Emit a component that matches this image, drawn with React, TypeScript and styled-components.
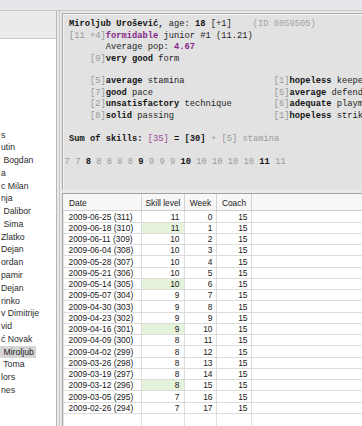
import React from 'react';
import styled, { createGlobalStyle } from 'styled-components';

const Global = createGlobalStyle`
  html, body { margin: 0; padding: 0; width: 362px; height: 426px; overflow: hidden; background: #e9e9e9; }
  #root { width: 362px; height: 426px; overflow: hidden; }
  * { box-sizing: border-box; }
`;

const Window = styled.div`
  width: 362px;
  height: 426px;
  display: flex;
  flex-direction: column;
  overflow: hidden;
  background: #e9e9e9;
`;

const TopStrip = styled.div`
  height: 11px;
  flex: none;
  background: #e6e7ec;
  border-bottom: 1px solid #c6c7cb;
`;

const Body = styled.div`
  flex: 1;
  display: flex;
  min-height: 0;
`;

const LeftPanel = styled.div`
  width: 57px;
  flex: none;
  display: flex;
  flex-direction: column;
  border-right: 1px solid #b7b7b7;
`;

const LeftHeader = styled.div`
  height: 28px;
  flex: none;
  background: #ebebeb;
  border-bottom: 1px solid #c9c9c9;
`;

const NameList = styled.ul`
  list-style: none;
  margin: 0;
  padding: 89.6px 0 0 0;
  flex: 1;
  background: #ffffff;
  overflow: hidden;
  font-family: "Liberation Sans", Arial, sans-serif;
  font-size: 8.7px;
  color: #2c2c2c;
`;

const NameItem = styled.li`
  height: 12.78px;
  line-height: 12.78px;
  white-space: pre;
  overflow: hidden;
`;

const NameLabel = styled.span<{ $selected?: boolean }>`
  display: inline-block;
  height: 12px;
  line-height: 12px;
  padding: 0 2px 0 1px;
  background: ${(p) => (p.$selected ? '#d5d5d5' : 'transparent')};
  color: ${(p) => (p.$selected ? '#1a1a1a' : '#2c2c2c')};
`;

const Splitter = styled.div`
  width: 5px;
  flex: none;
  background: linear-gradient(to right, #e8e8e8 0, #e8e8e8 1.5px, #c9c9c9 1.5px, #c9c9c9 2.5px, #e8e8e8 2.5px);
`;

const RightPane = styled.div`
  width: 430px;
  flex: none;
  display: flex;
  flex-direction: column;
  padding-top: 2px;
`;

const InfoPanel = styled.div`
  height: 177px;
  flex: none;
  background: #e2e2e2;
  border-top: 1px solid #a9a9a9;
  border-left: 1px solid #a9a9a9;
  box-shadow: inset 1px 1px 0 #f2f2f2;
  padding-top: 5.3px;
  font-family: "Liberation Mono", "Courier New", monospace;
  font-size: 8.75px;
  line-height: 11.45px;
  color: #1e1e1e;
  overflow: hidden;
`;

const InfoText = styled.div`
  padding-left: 6px;
  white-space: pre;
`;

const Line = styled.div`
  height: 11.45px;
  white-space: pre;
`;

const SkillGrid = styled.div`
  display: grid;
  grid-template-columns: 35ch auto;
  padding-left: 4ch;
  white-space: pre;
`;

const LevelsLine = styled.div`
  height: 11.45px;
  padding-left: 1.6px;
  white-space: pre;
`;

const Dim = styled.span`
  color: #999999;
`;

const Faint = styled.span`
  color: #a3a3a3;
`;

const B = styled.b`
  font-weight: bold;
  color: #141414;
`;

const Purple = styled.b`
  font-weight: bold;
  color: #86278a;
`;

const Violet = styled.span`
  color: #9a4c95;
`;

const Divider = styled.div`
  height: 3px;
  flex: none;
`;

const TableBox = styled.div`
  flex: 1;
  display: flex;
  flex-direction: column;
  background: #ffffff;
  border-top: 1px solid #a3a3a3;
  border-left: 1px solid #a3a3a3;
  box-shadow: inset 1px 0 0 #e6e6e6;
  font-family: "Liberation Sans", Arial, sans-serif;
  font-size: 8.4px;
  color: #202020;
  min-height: 0;
`;

const cols = '79px 43px 32px 35px 1fr';

const HeaderRow = styled.div`
  display: grid;
  grid-template-columns: ${cols};
  height: 17.4px;
  flex: none;
  background: #f7f7f7;
  border-bottom: 1px solid #cfcfcf;
`;

const HeadCell = styled.div<{ $left?: boolean }>`
  display: flex;
  align-items: center;
  justify-content: ${(p) => (p.$left ? 'flex-start' : 'center')};
  padding: 2px 0 0 ${(p) => (p.$left ? '6px' : '0')};
  border-right: 1px solid #d3d3d3;
  white-space: nowrap;
`;

const DataRow = styled.div`
  display: grid;
  grid-template-columns: ${cols};
  height: 11.25px;
  flex: none;
`;

const Cell = styled.div<{ $align?: 'left' | 'right'; $hl?: boolean; $pad?: number }>`
  display: flex;
  align-items: center;
  justify-content: ${(p) => (p.$align === 'left' ? 'flex-start' : 'flex-end')};
  padding: 0 ${(p) => (p.$align === 'left' ? 0 : p.$pad ?? 3.5)}px 0 ${(p) => (p.$align === 'left' ? 5.5 : 0)}px;
  border-right: 1px solid #dcdcdc;
  border-bottom: 1px solid #dcdcdc;
  background: ${(p) => (p.$hl ? '#e4f3da' : 'transparent')};
  white-space: nowrap;
  line-height: 10px;
`;

const FillerRow = styled.div`
  display: grid;
  grid-template-columns: ${cols};
  flex: 1;
`;

const FillerCell = styled.div`
  border-right: 1px solid #e2e2e2;
`;

const names: string[] = [
  's',
  'utin',
  ' Bogdan',
  'a',
  'c Milan',
  'nja',
  ' Dalibor',
  ' Sima',
  'Zlatko',
  'Dejan',
  'ordan',
  'pamir',
  'Dejan',
  'rinko',
  'v Dimitrije',
  'vid',
  'ć Novak',
  ' Miroljub',
  ' Toma',
  'lors',
  'nes',
];

type Row = { date: string; skill: number; week: number; coach: number; hl?: boolean };

const rows: Row[] = [
  { date: '2009-06-25 (311)', skill: 11, week: 0, coach: 15 },
  { date: '2009-06-18 (310)', skill: 11, week: 1, coach: 15, hl: true },
  { date: '2009-06-11 (309)', skill: 10, week: 2, coach: 15 },
  { date: '2009-06-04 (308)', skill: 10, week: 3, coach: 15 },
  { date: '2009-05-28 (307)', skill: 10, week: 4, coach: 15 },
  { date: '2009-05-21 (306)', skill: 10, week: 5, coach: 15 },
  { date: '2009-05-14 (305)', skill: 10, week: 6, coach: 15, hl: true },
  { date: '2009-05-07 (304)', skill: 9, week: 7, coach: 15 },
  { date: '2009-04-30 (303)', skill: 9, week: 8, coach: 15 },
  { date: '2009-04-23 (302)', skill: 9, week: 9, coach: 15 },
  { date: '2009-04-16 (301)', skill: 9, week: 10, coach: 15, hl: true },
  { date: '2009-04-09 (300)', skill: 8, week: 11, coach: 15 },
  { date: '2009-04-02 (299)', skill: 8, week: 12, coach: 15 },
  { date: '2009-03-26 (298)', skill: 8, week: 13, coach: 15 },
  { date: '2009-03-19 (297)', skill: 8, week: 14, coach: 15 },
  { date: '2009-03-12 (296)', skill: 8, week: 15, coach: 15, hl: true },
  { date: '2009-03-05 (295)', skill: 7, week: 16, coach: 15 },
  { date: '2009-02-26 (294)', skill: 7, week: 17, coach: 15 },
];

const leftSkills: [string, string, string][] = [
  ['5', 'average', 'stamina'],
  ['7', 'good', 'pace'],
  ['2', 'unsatisfactory', 'technique'],
  ['8', 'solid', 'passing'],
];

const rightSkills: [string, string, string][] = [
  ['1', 'hopeless', 'keeper'],
  ['5', 'average', 'defender'],
  ['6', 'adequate', 'playmaker'],
  ['1', 'hopeless', 'striker'],
];

const levels = [7, 7, 8, 8, 8, 8, 8, 9, 9, 9, 9, 10, 10, 10, 10, 10, 11, 11];

const SkillText = ({ s }: { s: [string, string, string] }) => (
  <span>
    <Dim>[{s[0]}]</Dim>
    <B>{s[1]}</B> {s[2]}
  </span>
);

export default function App() {
  return (
    <Window>
      <Global />
      <TopStrip />
      <Body>
        <LeftPanel>
          <LeftHeader />
          <NameList>
            {names.map((n, i) => (
              <NameItem key={i}>
                <NameLabel $selected={n === ' Miroljub'}>{n}</NameLabel>
              </NameItem>
            ))}
          </NameList>
        </LeftPanel>
        <Splitter />
        <RightPane>
          <InfoPanel>
            <InfoText>
              <Line>
                <B>Miroljub Urošević,</B> age: <B>18</B> [+1]    <Faint>(ID 8059505)</Faint>
              </Line>
              <Line>
                <Dim>[11 +4]</Dim>
                <Purple>formidable</Purple> junior #1 (11.21)
              </Line>
              <Line>
                {'       Average pop: '}
                <Purple>4.67</Purple>
              </Line>
              <Line>
                {'    '}
                <Dim>[9]</Dim>
                <B>very good</B> form
              </Line>
              <Line />
              <SkillGrid>
                {leftSkills.map((s, i) => (
                  <React.Fragment key={i}>
                    <Line>
                      <SkillText s={s} />
                    </Line>
                    <Line>
                      <SkillText s={rightSkills[i]} />
                    </Line>
                  </React.Fragment>
                ))}
              </SkillGrid>
              <Line />
              <Line>
                <B>Sum of skills:</B> <Violet>[35]</Violet> <B>=</B> <B>[30]</B> <Dim>+ [5] stamina</Dim>
              </Line>
              <Line />
            </InfoText>
            <LevelsLine>
              {levels.map((v, i) => {
                const first = i > 0 && levels[i - 1] !== v;
                return (
                  <React.Fragment key={i}>
                    {first ? <B>{v}</B> : <Dim>{v}</Dim>}
                    {i < levels.length - 1 ? ' ' : ''}
                  </React.Fragment>
                );
              })}
            </LevelsLine>
          </InfoPanel>
          <Divider />
          <TableBox>
            <HeaderRow>
              <HeadCell $left>Date</HeadCell>
              <HeadCell>Skill level</HeadCell>
              <HeadCell>Week</HeadCell>
              <HeadCell>Coach</HeadCell>
              <HeadCell />
            </HeaderRow>
            {rows.map((r) => (
              <DataRow key={r.date}>
                <Cell $align="left">{r.date}</Cell>
                <Cell $hl={r.hl} $pad={4.5}>{r.skill}</Cell>
                <Cell>{r.week}</Cell>
                <Cell>{r.coach}</Cell>
                <Cell />
              </DataRow>
            ))}
            <FillerRow>
              <FillerCell />
              <FillerCell />
              <FillerCell />
              <FillerCell />
              <FillerCell />
            </FillerRow>
          </TableBox>
        </RightPane>
      </Body>
    </Window>
  );
}
